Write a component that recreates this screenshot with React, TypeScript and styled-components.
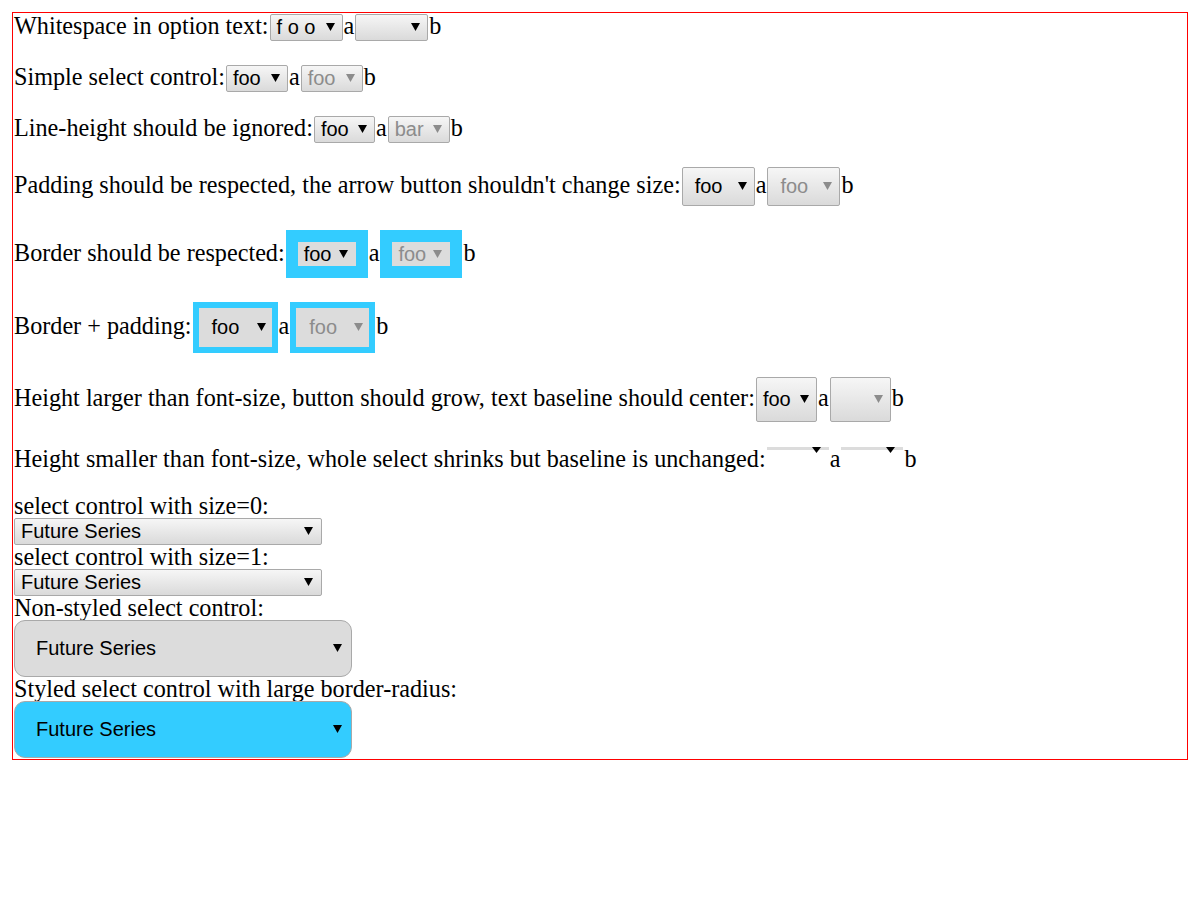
import React from "react";
import styled, { createGlobalStyle, css } from "styled-components";

const GlobalStyle = createGlobalStyle`
  html, body { margin: 0; padding: 0; background: #fff; }
  body {
    padding: 12px;
    font-family: "Liberation Serif", "Times New Roman", serif;
    font-size: 24.2px;
    line-height: 24px;
    color: #000;
  }
`;

const Frame = styled.div`
  border: 1px solid red;
  padding: 0 0 1px 1px;
`;

const Row = styled.div<{ $after?: number }>`
  margin-bottom: ${(p) => p.$after ?? 22}px;
  white-space: nowrap;
`;

const Caption = styled.div`
  white-space: nowrap;
`;

const Line = styled.div``;

type Skin = "plain" | "ring" | "round" | "roundCyan";

const skins = {
  plain: css`
    border: 1px solid #a9a9a9;
    border-radius: 2px;
    background: linear-gradient(#f6f6f6, #dadada);
  `,
  ring: css`
    background: #dcdcdc;
    background-clip: padding-box;
  `,
  round: css`
    border: 1px solid #a9a9a9;
    border-radius: 11px;
    background: #dcdcdc;
  `,
  roundCyan: css`
    border: 1px solid #a9a9a9;
    border-radius: 11px;
    background: #33ccff;
  `,
};

const Select = styled.span<{
  $w: number;
  $h: number;
  $pl?: number;
  $pr?: number;
  $disabled?: boolean;
  $ring?: number;
  $skin?: Skin;
  $block?: boolean;
}>`
  display: inline-flex;
  align-items: center;
  justify-content: space-between;
  box-sizing: border-box;
  width: ${(p) => p.$w}px;
  height: ${(p) => p.$h}px;
  margin: ${(p) => (p.$block ? "0" : "1px")};
  vertical-align: ${(p) => (p.$block ? "top" : "baseline")};
  padding: 0 ${(p) => p.$pr ?? 7}px 0 ${(p) => p.$pl ?? 6}px;
  font-family: "Liberation Sans", Arial, sans-serif;
  font-size: 20px;
  line-height: normal;
  color: ${(p) => (p.$disabled ? "#8c8c8c" : "#000")};
  white-space: pre;
  ${(p) => skins[p.$skin ?? "plain"]}
  ${(p) =>
    p.$ring
      ? css`
          border: ${p.$ring}px solid #33ccff;
        `
      : ""}
`;

const OptionText = styled.span`
  white-space: pre;
`;

const ArrowSlot = styled.span`
  display: inline-block;
`;

const ArrowSvg = styled.svg`
  display: inline-block;
  vertical-align: 3px;
  fill: currentColor;
`;

const Arrow = () => (
  <ArrowSvg width="9" height="8" viewBox="0 0 9 8">
    <polygon points="0,0 9,0 4.5,8" />
  </ArrowSvg>
);

const Thin = styled.span`
  display: inline-block;
  box-sizing: border-box;
  width: 62px;
  height: 3px;
  margin: 0 1px;
  background: #dcdcdc;
  vertical-align: 17px;
`;

const ThinArrow = styled.svg`
  display: block;
  margin: 0 8px 0 auto;
  fill: #000;
`;

type DDProps = {
  text?: string;
  w: number;
  h?: number;
  pl?: number;
  pr?: number;
  disabled?: boolean;
  ring?: number;
  skin?: Skin;
  block?: boolean;
};

function Dropdown({ text, w, h = 27, pl, pr, disabled, ring, skin, block }: DDProps) {
  return (
    <Select
      $w={w}
      $h={h}
      $pl={pl}
      $pr={pr}
      $disabled={disabled}
      $ring={ring}
      $skin={ring ? "ring" : skin}
      $block={block}
    >
      <OptionText>{text || "\u00a0"}</OptionText>
      <ArrowSlot>
        <Arrow />
      </ArrowSlot>
    </Select>
  );
}

function ThinDropdown() {
  return (
    <Thin>
      <ThinArrow width="9" height="6" viewBox="0 0 9 6">
        <polygon points="0,0 9,0 4.5,6" />
      </ThinArrow>
    </Thin>
  );
}

export default function App() {
  return (
    <>
      <GlobalStyle />
      <Frame>
        <Row>
          Whitespace in option text:
          <Dropdown text="f o o" w={73} />a<Dropdown w={73} />b
        </Row>
        <Row>
          Simple select control:
          <Dropdown text="foo" w={62} />a<Dropdown text="foo" w={62} disabled />b
        </Row>
        <Row>
          Line-height should be ignored:
          <Dropdown text="foo" w={61} />a<Dropdown text="bar" w={62} disabled />b
        </Row>
        <Row>
          Padding should be respected, the arrow button shouldn't change size:
          <Dropdown text="foo" w={73} h={39} pl={12} />a
          <Dropdown text="foo" w={73} h={39} pl={12} disabled />b
        </Row>
        <Row>
          Border should be respected:
          <Dropdown text="foo" w={82} h={48} ring={12} pl={6} pr={8} />a
          <Dropdown text="foo" w={82} h={48} ring={12} pl={6} pr={8} disabled />b
        </Row>
        <Row>
          Border + padding:
          <Dropdown text="foo" w={85} h={51} ring={6} pl={13} pr={6} />a
          <Dropdown text="foo" w={85} h={51} ring={6} pl={13} pr={6} disabled />b
        </Row>
        <Row $after={24}>
          Height larger than font-size, button should grow, text baseline should center:
          <Dropdown text="foo" w={61} h={45} />a<Dropdown w={61} h={45} disabled />b
        </Row>
        <Row $after={23}>
          Height smaller than font-size, whole select shrinks but baseline is unchanged:
          <ThinDropdown />a<ThinDropdown />b
        </Row>
        <Caption>select control with size=0:</Caption>
        <Line>
          <Dropdown text="Future Series" w={308} pr={8} block />
        </Line>
        <Caption>select control with size=1:</Caption>
        <Line>
          <Dropdown text="Future Series" w={308} pr={8} block />
        </Line>
        <Caption>Non-styled select control:</Caption>
        <Line>
          <Dropdown text="Future Series" w={338} h={57} pl={21} pr={9} skin="round" block />
        </Line>
        <Caption>Styled select control with large border-radius:</Caption>
        <Line>
          <Dropdown text="Future Series" w={338} h={57} pl={21} pr={9} skin="roundCyan" block />
        </Line>
      </Frame>
    </>
  );
}
